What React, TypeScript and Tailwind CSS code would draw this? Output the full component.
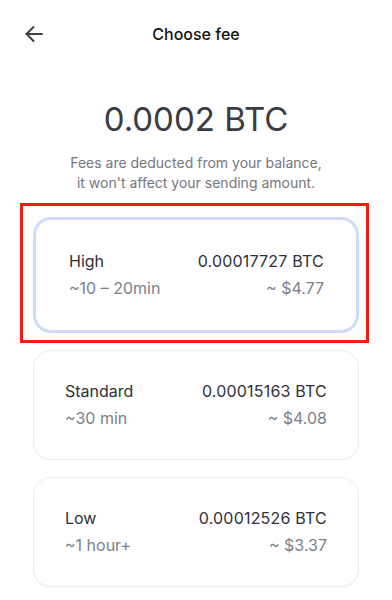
const fees = [
  { name: 'High', time: '~10 – 20min', btc: '0.00017727 BTC', usd: '~ $4.77', selected: true },
  { name: 'Standard', time: '~30 min', btc: '0.00015163 BTC', usd: '~ $4.08', selected: false },
  { name: 'Low', time: '~1 hour+', btc: '0.00012526 BTC', usd: '~ $3.37', selected: false },
];

const ArrowLeft = () => (
  <svg width="20" height="20" viewBox="0 0 20 20" fill="none" stroke="#3f3f46" strokeWidth="2" strokeLinecap="round" strokeLinejoin="round">
    <path d="M18 10H2.5" />
    <path d="M9.5 3L2.5 10l7 7" />
  </svg>
);

export default function App() {
  return (
    <div className="w-[392px] h-[600px] bg-white overflow-hidden" style={{ fontFamily: 'Inter, "Noto Sans", sans-serif' }}>
      {/* Header */}
      <div className="relative h-[68px] flex items-center justify-center">
        <button className="absolute left-[24px] top-[24px]">
          <ArrowLeft />
        </button>
        <h1 className="text-[16px] font-medium text-[#111111]">Choose fee</h1>
      </div>

      <div className="mt-[31px] text-center text-[33px] leading-[40px] text-[#3a3b45]">0.0002 BTC</div>
      <p className="mt-[14px] text-center text-[14px] leading-[20px] text-[#75767f]">
        Fees are deducted from your balance,
        <br />
        it won't affect your sending amount.
      </p>

      <div className="mt-[24px] px-[33px] flex flex-col gap-[17px]">
        {fees.map((f) => (
          <div
            key={f.name}
            className={
              f.selected
                ? 'relative h-[116px] rounded-[18px] border-[3px] border-[#cfdbf8] bg-white pl-[33px] pr-[32px] flex flex-col justify-center'
                : 'relative h-[110px] rounded-[18px] border border-[#ececef] bg-white pl-[31px] pr-[31px] flex flex-col justify-center shadow-[0_1px_2px_rgba(0,0,0,0.03)]'
            }
          >
            {f.selected && (
              <div className="absolute -left-[16px] -right-[13px] -top-[17px] -bottom-[13px] border-[3px] border-[#f01c14] pointer-events-none" />
            )}
            <div className="flex justify-between text-[16px] leading-[27px] text-[#2f3039]">
              <span>{f.name}</span>
              <span className="tracking-[0.2px]">{f.btc}</span>
            </div>
            <div className="flex justify-between text-[16px] leading-[27px] text-[#7b7f8a]">
              <span>{f.time}</span>
              <span>{f.usd}</span>
            </div>
          </div>
        ))}
      </div>
    </div>
  );
}
